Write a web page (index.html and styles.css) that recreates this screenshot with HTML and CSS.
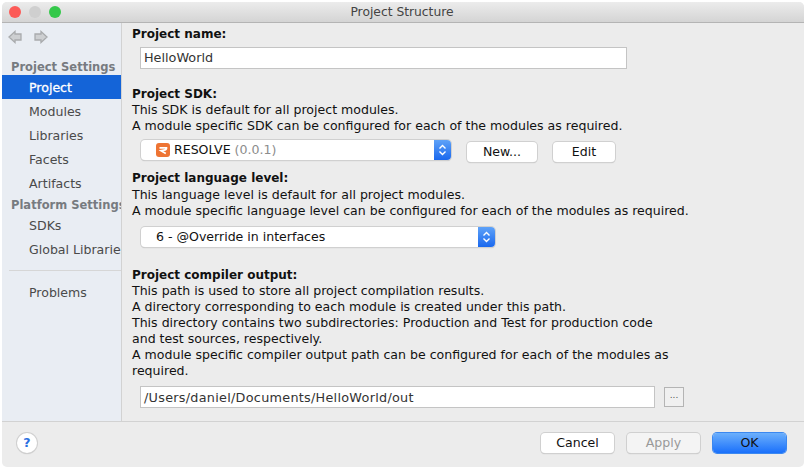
FILE: index.html
```html
<!DOCTYPE html>
<html lang="en">
<head>
    <meta charset="UTF-8">
    <title>Project Structure</title>
    <link rel="stylesheet" href="styles.css">
</head>
<body>
    <div class="window">
        <div class="titlebar">
            <div class="lights">
                <span class="light red"></span>
                <span class="light grey"></span>
                <span class="light green"></span>
            </div>
            <div class="title">Project Structure</div>
        </div>
        <div class="main">
            <div class="sidebar">
                <div class="nav-arrows">
                    <svg width="14" height="14" viewBox="0 0 14 14"><path d="M7 1.500 1 7l6 5.500V10h6V4H7z" fill="#cdcfd1" stroke="#a9abad" stroke-width="1.300"/></svg>
                    <svg width="14" height="14" viewBox="0 0 14 14"><path d="M7 1.500 13 7l-6 5.500V10H1V4h6z" fill="#cdcfd1" stroke="#a9abad" stroke-width="1.300"/></svg>
                </div>
                <div class="side-head first">Project Settings</div>
                <div class="side-item selected">Project</div>
                <div class="side-item">Modules</div>
                <div class="side-item">Libraries</div>
                <div class="side-item">Facets</div>
                <div class="side-item">Artifacts</div>
                <div class="side-head second">Platform Settings</div>
                <div class="side-item">SDKs</div>
                <div class="side-item">Global Libraries</div>
                <div class="side-divider"></div>
                <div class="side-item">Problems</div>
            </div>
            <div class="content">
                <div class="label">Project name:</div>
                <div class="text-input name-input">HelloWorld</div>

                <div class="label sdk-label">Project SDK:</div>
                <div class="line">This SDK is default for all project modules.</div>
                <div class="line">A module specific SDK can be configured for each of the modules as required.</div>
                <div class="row sdk-row">
                    <div class="combo sdk-combo">
                        <svg class="sdk-icon" width="14" height="14" viewBox="0 0 14 14"><rect width="14" height="14" rx="3" fill="#ee7433"/><path d="M3.500 4.800H10.500Q10.800 6.800 8 7.200L5 7.700 9.800 10.500" fill="none" stroke="#fff" stroke-width="1.700"/></svg>
                        <span>RESOLVE <span class="muted">(0.0.1)</span></span>
                        <span class="stepper"><svg width="9" height="14" viewBox="0 0 9 14"><path d="M1.500 5.500 4.500 2.500 7.500 5.500M1.500 8.500 4.500 11.500 7.500 8.500" fill="none" stroke="#fff" stroke-width="1.400"/></svg></span>
                    </div>
                    <div class="btn new-btn">New...</div>
                    <div class="btn edit-btn">Edit</div>
                </div>

                <div class="label lang-label">Project language level:</div>
                <div class="line">This language level is default for all project modules.</div>
                <div class="line">A module specific language level can be configured for each of the modules as required.</div>
                <div class="row level-row">
                    <div class="combo level-combo">
                        <span>6 - @Override in interfaces</span>
                        <span class="stepper"><svg width="9" height="14" viewBox="0 0 9 14"><path d="M1.500 5.500 4.500 2.500 7.500 5.500M1.500 8.500 4.500 11.500 7.500 8.500" fill="none" stroke="#fff" stroke-width="1.400"/></svg></span>
                    </div>
                </div>

                <div class="label output-label">Project compiler output:</div>
                <div class="line">This path is used to store all project compilation results.</div>
                <div class="line">A directory corresponding to each module is created under this path.</div>
                <div class="line">This directory contains two subdirectories: Production and Test for production code</div>
                <div class="line">and test sources, respectively.</div>
                <div class="line">A module specific compiler output path can be configured for each of the modules as</div>
                <div class="line">required.</div>
                <div class="row output-row">
                    <div class="text-input output-input">/Users/daniel/Documents/HelloWorld/out</div>
                    <div class="browse">...</div>
                </div>
            </div>
        </div>
        <div class="footer">
            <div class="help">?</div>
            <div class="footer-btns">
                <div class="btn footer-btn">Cancel</div>
                <div class="btn footer-btn disabled">Apply</div>
                <div class="btn footer-btn primary">OK</div>
            </div>
        </div>
    </div>
</body>
</html>
```

FILE: styles.css
```css
html, body {
    margin: 0;
    padding: 0;
    background-color: #fff;
}
body {
    width: 806px;
    height: 469px;
    overflow: hidden;
    font-family: "DejaVu Sans", sans-serif;
    font-size: 12.55px;
    color: #111;
}
.window {
    width: 802px;
    height: 465px;
    margin: 2px 2px 0;
    background-color: #ececec;
    border-radius: 5px;
    overflow: hidden;
    display: flex;
    flex-direction: column;
}
.titlebar {
    height: 20px;
    flex: none;
    position: relative;
    background: linear-gradient(#ececec, #d4d4d4);
    border-bottom: 1px solid #b4b4b4;
    text-align: center;
    line-height: 21px;
    font-size: 12.3px;
    color: #444;
    padding-right: 2px;
}
.lights {
    position: absolute;
    left: 7px;
    top: 4px;
    display: flex;
    gap: 8px;
}
.light {
    width: 12px;
    height: 12px;
    border-radius: 50%;
}
.red { background-color: #fc5b57; }
.grey { background-color: #cfcfcf; }
.green { background-color: #34c84a; }

.main {
    flex: 1;
    display: flex;
    min-height: 0;
}
.sidebar {
    width: 119px;
    flex: none;
    background-color: #e9edf3;
    border-right: 1px solid #d2d2d2;
    overflow: hidden;
    white-space: nowrap;
}
.nav-arrows {
    display: flex;
    gap: 12px;
    padding: 7px 0 0 6px;
    height: 23px;
}
.side-head {
    font-size: 11.5px;
    font-weight: bold;
    color: #777b80;
    padding-left: 9px;
    line-height: 16px;
    height: 16px;
}
.side-head.first {
    margin-top: 6px;
}
.side-head.second {
    margin-top: 2px;
}
.side-item {
    height: 24px;
    line-height: 26px;
    padding-left: 27px;
    color: #4a4a4a;
}
.side-item.selected {
    background-color: #1464d8;
    color: #fff;
    -webkit-text-stroke: 0.3px #fff;
}
.side-divider {
    height: 1px;
    margin: 9px 0 9px 7px;
    background-color: #d6d6d6;
}

.content {
    flex: 1;
    padding: 4px 0 0 10px;
    min-width: 0;
}
.label {
    font-size: 12px;
    font-weight: bold;
    line-height: 15px;
}
.line {
    line-height: 16px;
}
.text-input {
    background-color: #fff;
    border: 1px solid #c4c4c4;
    box-sizing: border-box;
    height: 22px;
    line-height: 20px;
    padding-left: 3px;
    font-size: 12.8px;
    color: #333;
}
.name-input {
    width: 487px;
    margin: 5px 0 0 8px;
}
.sdk-label {
    margin-top: 18px;
}
.lang-label {
    margin-top: 9px;
    padding-bottom: 1px;
}
.output-label {
    margin-top: 21px;
}
.row {
    display: flex;
}
.sdk-row {
    margin: 6px 0 0 9px;
    height: 22px;
}
.level-row {
    margin: 8px 0 0 9px;
    height: 20px;
}
.output-row {
    margin: 7px 0 0 8px;
    align-items: center;
}
.combo {
    height: 20px;
    box-sizing: border-box;
    background-color: #fff;
    border-radius: 4px;
    box-shadow: 0 0 0 1px #d0d0d0, 0 1px 1px #b8b8b8;
    position: relative;
    line-height: 20px;
    display: flex;
    align-items: center;
}
.sdk-combo {
    width: 310px;
    padding-left: 15px;
    gap: 4px;
}
.level-combo {
    width: 354px;
    padding-left: 15px;
}
.sdk-icon {
    flex: none;
}
.muted {
    color: #8c8c8c;
}
.stepper {
    position: absolute;
    right: 0;
    top: 0;
    width: 17px;
    height: 20px;
    border-radius: 0 4px 4px 0;
    background: linear-gradient(#5ea2f8, #1a68ee);
    display: flex;
    align-items: center;
    justify-content: center;
}
.btn {
    height: 20px;
    box-sizing: border-box;
    background-color: #fff;
    border-radius: 4px;
    box-shadow: 0 0 0 1px #d0d0d0, 0 1px 1px #b8b8b8;
    text-align: center;
    line-height: 20px;
}
.new-btn {
    width: 70px;
    margin: 2px 0 0 16px;
}
.edit-btn {
    width: 62px;
    margin: 2px 0 0 16px;
}
.output-input {
    width: 515px;
    letter-spacing: 0.27px;
    line-height: 21px;
}
.browse {
    width: 20px;
    height: 20px;
    box-sizing: border-box;
    margin-left: 9px;
    border: 1px solid #b4b4b4;
    background-color: #f0f0f0;
    text-align: center;
    line-height: 14px;
    font-size: 9px;
    color: #555;
}
.footer {
    height: 42px;
    flex: none;
    border-top: 1px solid #d2d2d2;
    display: flex;
    align-items: center;
    justify-content: space-between;
    padding: 0 18px 3px 15px;
}
.help {
    width: 20px;
    height: 20px;
    border-radius: 50%;
    background-color: #fff;
    box-shadow: 0 0 0 1px #d0d0d0, 0 1px 1px #b0b0b0;
    text-align: center;
    line-height: 20px;
    font-weight: bold;
    color: #2a6fe0;
}
.footer-btns {
    display: flex;
    gap: 13px;
}
.footer-btn {
    width: 73px;
}
.footer-btn.disabled {
    background-color: #f4f4f4;
    color: #999;
}
.footer-btn.primary {
    background: linear-gradient(#6cb0fc, #1a70fb);
    box-shadow: 0 0 0 1px #3b88f0;
}
```
